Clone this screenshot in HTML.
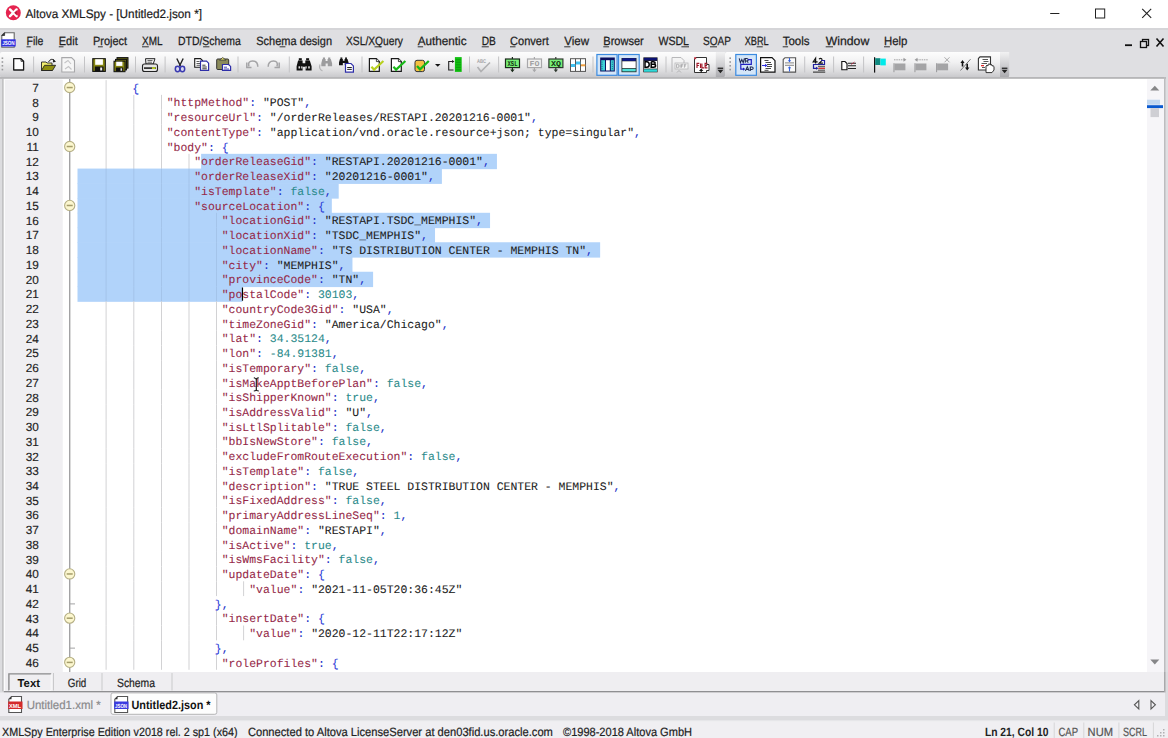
<!DOCTYPE html>
<html><head><meta charset="utf-8"><title>Altova XMLSpy</title>
<style>html,body{margin:0;padding:0;overflow:hidden;background:#e3e3e6}svg{display:block}</style></head>
<body><svg width="1168" height="738" viewBox="0 0 1168 738" text-rendering="geometricPrecision">
<rect x="0" y="0" width="1168" height="738" fill="#dfdfe2" />
<rect x="0" y="0" width="1168" height="28" fill="#ffffff" />
<rect x="0" y="28.2" width="1168" height="1.6" fill="#d3d3d5" />
<circle cx="13.3" cy="12.8" r="7.5" fill="#e5234f"/>
<path d="M10 9.4 L16.6 16.2 M16.6 9.4 L10 16.2" stroke="#fff" stroke-width="2.4" fill="none" stroke-linecap="round"/><path d="M14.2 12.8 L16.8 10.2 L16.8 15.4 Z" fill="#b81a3c"/>
<text x="25.50" y="17.80" font-family="Liberation Sans" font-size="12.3" font-weight="normal" fill="#1a1a1a" text-anchor="start" textLength="176.50" lengthAdjust="spacingAndGlyphs"  stroke="#1a1a1a" stroke-width="0.2">Altova XMLSpy - [Untitled2.json *]</text>
<path d="M1050.2 13.5 H1059.4" stroke="#222" stroke-width="1"/>
<rect x="1095.5" y="9" width="9.2" height="9" fill="none" stroke="#222" stroke-width="1"/>
<path d="M1142.2 8.8 L1151.2 17.8 M1151.2 8.8 L1142.2 17.8" stroke="#222" stroke-width="1.1"/>
<g><path d="M4.6 32.7 H14.2 V47.2 H1.8 V35.5 Z" fill="#fff" stroke="#666" stroke-width="1.1"/><path d="M1.8 35.5 L4.6 32.7 V35.5 Z" fill="#333" stroke="#333" stroke-width="0.8"/><rect x="1.3" y="39.3" width="14.4" height="7.2" fill="#2f2fe0"/><text x="2.2" y="45.4" font-family="Liberation Sans" font-size="6" font-weight="bold" fill="#fff" textLength="12.5" lengthAdjust="spacingAndGlyphs">JSON</text></g>
<text x="26.50" y="44.60" font-family="Liberation Sans" font-size="12" font-weight="normal" fill="#1e1e1e" text-anchor="start" textLength="16.90" lengthAdjust="spacingAndGlyphs" stroke="#1e1e1e" stroke-width="0.25">File</text>
<rect x="26.5" y="46.3" width="4.2" height="1" fill="#333" />
<text x="58.80" y="44.60" font-family="Liberation Sans" font-size="12" font-weight="normal" fill="#1e1e1e" text-anchor="start" textLength="18.90" lengthAdjust="spacingAndGlyphs" stroke="#1e1e1e" stroke-width="0.25">Edit</text>
<rect x="58.8" y="46.3" width="4.7" height="1" fill="#333" />
<text x="93.00" y="44.60" font-family="Liberation Sans" font-size="12" font-weight="normal" fill="#1e1e1e" text-anchor="start" textLength="34.00" lengthAdjust="spacingAndGlyphs" stroke="#1e1e1e" stroke-width="0.25">Project</text>
<rect x="97.9" y="46.3" width="4.9" height="1" fill="#333" />
<text x="142.00" y="44.60" font-family="Liberation Sans" font-size="12" font-weight="normal" fill="#1e1e1e" text-anchor="start" textLength="20.50" lengthAdjust="spacingAndGlyphs" stroke="#1e1e1e" stroke-width="0.25">XML</text>
<rect x="142.0" y="46.3" width="6.8" height="1" fill="#333" />
<text x="178.00" y="44.60" font-family="Liberation Sans" font-size="12" font-weight="normal" fill="#1e1e1e" text-anchor="start" textLength="62.70" lengthAdjust="spacingAndGlyphs" stroke="#1e1e1e" stroke-width="0.25">DTD/Schema</text>
<rect x="203.1" y="46.3" width="6.3" height="1" fill="#333" />
<text x="256.30" y="44.60" font-family="Liberation Sans" font-size="12" font-weight="normal" fill="#1e1e1e" text-anchor="start" textLength="75.70" lengthAdjust="spacingAndGlyphs" stroke="#1e1e1e" stroke-width="0.25">Schema design</text>
<rect x="279.6" y="46.3" width="5.8" height="1" fill="#333" />
<text x="346.00" y="44.60" font-family="Liberation Sans" font-size="12" font-weight="normal" fill="#1e1e1e" text-anchor="start" textLength="57.00" lengthAdjust="spacingAndGlyphs" stroke="#1e1e1e" stroke-width="0.25">XSL/XQuery</text>
<rect x="374.5" y="46.3" width="5.7" height="1" fill="#333" />
<text x="417.70" y="44.60" font-family="Liberation Sans" font-size="12" font-weight="normal" fill="#1e1e1e" text-anchor="start" textLength="48.90" lengthAdjust="spacingAndGlyphs" stroke="#1e1e1e" stroke-width="0.25">Authentic</text>
<rect x="417.7" y="46.3" width="5.4" height="1" fill="#333" />
<text x="481.70" y="44.60" font-family="Liberation Sans" font-size="12" font-weight="normal" fill="#1e1e1e" text-anchor="start" textLength="14.10" lengthAdjust="spacingAndGlyphs" stroke="#1e1e1e" stroke-width="0.25">DB</text>
<rect x="481.7" y="46.3" width="7.1" height="1" fill="#333" />
<text x="510.00" y="44.60" font-family="Liberation Sans" font-size="12" font-weight="normal" fill="#1e1e1e" text-anchor="start" textLength="38.80" lengthAdjust="spacingAndGlyphs" stroke="#1e1e1e" stroke-width="0.25">Convert</text>
<rect x="510.0" y="46.3" width="5.5" height="1" fill="#333" />
<text x="564.20" y="44.60" font-family="Liberation Sans" font-size="12" font-weight="normal" fill="#1e1e1e" text-anchor="start" textLength="24.80" lengthAdjust="spacingAndGlyphs" stroke="#1e1e1e" stroke-width="0.25">View</text>
<rect x="564.2" y="46.3" width="6.2" height="1" fill="#333" />
<text x="603.30" y="44.60" font-family="Liberation Sans" font-size="12" font-weight="normal" fill="#1e1e1e" text-anchor="start" textLength="40.40" lengthAdjust="spacingAndGlyphs" stroke="#1e1e1e" stroke-width="0.25">Browser</text>
<rect x="603.3" y="46.3" width="5.8" height="1" fill="#333" />
<text x="658.40" y="44.60" font-family="Liberation Sans" font-size="12" font-weight="normal" fill="#1e1e1e" text-anchor="start" textLength="30.60" lengthAdjust="spacingAndGlyphs" stroke="#1e1e1e" stroke-width="0.25">WSDL</text>
<rect x="681.4" y="46.3" width="7.6" height="1" fill="#333" />
<text x="703.00" y="44.60" font-family="Liberation Sans" font-size="12" font-weight="normal" fill="#1e1e1e" text-anchor="start" textLength="28.00" lengthAdjust="spacingAndGlyphs" stroke="#1e1e1e" stroke-width="0.25">SOAP</text>
<rect x="710.0" y="46.3" width="7.0" height="1" fill="#333" />
<text x="744.70" y="44.60" font-family="Liberation Sans" font-size="12" font-weight="normal" fill="#1e1e1e" text-anchor="start" textLength="24.00" lengthAdjust="spacingAndGlyphs" stroke="#1e1e1e" stroke-width="0.25">XBRL</text>
<rect x="756.7" y="46.3" width="6.0" height="1" fill="#333" />
<text x="782.70" y="44.60" font-family="Liberation Sans" font-size="12" font-weight="normal" fill="#1e1e1e" text-anchor="start" textLength="26.90" lengthAdjust="spacingAndGlyphs" stroke="#1e1e1e" stroke-width="0.25">Tools</text>
<rect x="782.7" y="46.3" width="5.4" height="1" fill="#333" />
<text x="825.70" y="44.60" font-family="Liberation Sans" font-size="12" font-weight="normal" fill="#1e1e1e" text-anchor="start" textLength="43.60" lengthAdjust="spacingAndGlyphs" stroke="#1e1e1e" stroke-width="0.25">Window</text>
<rect x="825.7" y="46.3" width="7.3" height="1" fill="#333" />
<text x="884.00" y="44.60" font-family="Liberation Sans" font-size="12" font-weight="normal" fill="#1e1e1e" text-anchor="start" textLength="23.40" lengthAdjust="spacingAndGlyphs" stroke="#1e1e1e" stroke-width="0.25">Help</text>
<rect x="884.0" y="46.3" width="5.9" height="1" fill="#333" />
<path d="M1125 45.2 H1132" stroke="#111" stroke-width="1.8"/>
<rect x="1142.5" y="39.5" width="6" height="6" fill="none" stroke="#111" stroke-width="1.3"/><rect x="1140.5" y="41.5" width="6" height="6" fill="#dfdfe2" stroke="#111" stroke-width="1.3"/>
<path d="M1156.5 38.5 L1163.5 46.5 M1163.5 38.5 L1156.5 46.5" stroke="#111" stroke-width="1.6"/>
<defs><linearGradient id="tb" x1="0" y1="0" x2="0" y2="1"><stop offset="0" stop-color="#fdfdfd"/><stop offset="0.4" stop-color="#f1f1f2"/><stop offset="0.75" stop-color="#dcdcde"/><stop offset="1" stop-color="#c8c8cb"/></linearGradient><linearGradient id="chev" x1="0" y1="0" x2="0" y2="1"><stop offset="0" stop-color="#f2f2f3"/><stop offset="0.5" stop-color="#d0d0d3"/><stop offset="1" stop-color="#a9a9ad"/></linearGradient></defs>
<rect x="0" y="52" width="724" height="25.5" rx="2" fill="url(#tb)"/>
<rect x="725" y="52" width="284" height="25.5" rx="2" fill="url(#tb)"/>
<rect x="1.5999999999999999" y="57.400000000000006" width="1.6" height="1.6" fill="#9a9a9c"/>
<rect x="1.5999999999999999" y="61.2" width="1.6" height="1.6" fill="#9a9a9c"/>
<rect x="1.5999999999999999" y="65.0" width="1.6" height="1.6" fill="#9a9a9c"/>
<rect x="1.5999999999999999" y="68.8" width="1.6" height="1.6" fill="#9a9a9c"/>
<rect x="729.4000000000001" y="57.400000000000006" width="1.6" height="1.6" fill="#9a9a9c"/>
<rect x="729.4000000000001" y="61.2" width="1.6" height="1.6" fill="#9a9a9c"/>
<rect x="729.4000000000001" y="65.0" width="1.6" height="1.6" fill="#9a9a9c"/>
<rect x="729.4000000000001" y="68.8" width="1.6" height="1.6" fill="#9a9a9c"/>
<rect x="33.1" y="56.5" width="1" height="16" fill="#c4c4c6"/>
<rect x="84.0" y="56.5" width="1" height="16" fill="#c4c4c6"/>
<rect x="135.0" y="56.5" width="1" height="16" fill="#c4c4c6"/>
<rect x="164.6" y="56.5" width="1" height="16" fill="#c4c4c6"/>
<rect x="237.5" y="56.5" width="1" height="16" fill="#c4c4c6"/>
<rect x="288.8" y="56.5" width="1" height="16" fill="#c4c4c6"/>
<rect x="361.5" y="56.5" width="1" height="16" fill="#c4c4c6"/>
<rect x="469.0" y="56.5" width="1" height="16" fill="#c4c4c6"/>
<rect x="498.1" y="56.5" width="1" height="16" fill="#c4c4c6"/>
<rect x="592.5" y="56.5" width="1" height="16" fill="#c4c4c6"/>
<rect x="665.5" y="56.5" width="1" height="16" fill="#c4c4c6"/>
<rect x="804.2" y="56.5" width="1" height="16" fill="#c4c4c6"/>
<rect x="833.1" y="56.5" width="1" height="16" fill="#c4c4c6"/>
<rect x="863.1" y="56.5" width="1" height="16" fill="#c4c4c6"/>
<path d="M715.8 52 H725.0 V75 Q725.0 77.5 722.5 77.5 H715.8 Z" fill="url(#chev)"/>
<rect x="717.5999999999999" y="67.6" width="5.6" height="1.3" fill="#222"/>
<path d="M717.4 69.8 H723.4 L720.4 73.2 Z" fill="#222"/>
<path d="M1000 52 H1009.2 V75 Q1009.2 77.5 1006.7 77.5 H1000 Z" fill="url(#chev)"/>
<rect x="1001.8" y="67.6" width="5.6" height="1.3" fill="#222"/>
<path d="M1001.6 69.8 H1007.6 L1004.6 73.2 Z" fill="#222"/>
<path d="M13.7 58.7 H21 L23.6 61.3 V70 H13.7 Z" fill="#fff" stroke="#1a1a1a" stroke-width="1.3" stroke-linejoin="round"/><path d="M21 58.9 V61.3 H23.4" fill="none" stroke="#1a1a1a" stroke-width="0.8"/>
<path d="M41.5 62 H46 L47 63 H52 V70.5 H41.5 Z" fill="#f4f070" stroke="#222" stroke-width="0.9"/>
<path d="M41.5 70.5 L44.5 65.3 H55.6 L52.5 70.5 Z" fill="#8f8f10" stroke="#222" stroke-width="0.9"/>
<path d="M48.5 62 Q51 57.5 54.5 60.5" stroke="#222" stroke-width="1" fill="none"/><path d="M53.2 59 L56 61.8 L52.8 62.4 Z" fill="#222"/>
<path d="M61.8 57.6 H71.5 L74.5 60.6 V72 H61.8 Z" fill="#f6f6f6" stroke="#a8a8aa" stroke-width="1.1"/>
<path d="M64.5 63 L68 60.5 L71 64 M65 69 L68.5 66.5 L71.5 69.5" stroke="#c4c4c6" stroke-width="1.1" fill="none"/>
<rect x="92.8" y="58.7" width="12.5" height="12.7" fill="#868612" stroke="#111" stroke-width="1.1"/>
<rect x="95.2" y="59.2" width="7.7" height="5.6" fill="#fff"/>
<rect x="94.8" y="66.5" width="8.8" height="4.9" fill="#111"/><rect x="100.2" y="67.5" width="2" height="3" fill="#eee"/>
<rect x="117" y="57.6" width="11" height="10.5" fill="#5a5a10" stroke="#111" stroke-width="1"/>
<rect x="115.5" y="59.4" width="11" height="10.5" fill="#6b6b12" stroke="#111" stroke-width="1"/>
<rect x="114" y="61.2" width="11" height="10.5" fill="#868612" stroke="#111" stroke-width="1"/>
<rect x="116.2" y="61.7" width="6.2" height="4.2" fill="#fff"/><rect x="115.8" y="67.5" width="7.5" height="4" fill="#111"/><rect x="120.5" y="68.3" width="1.6" height="2.5" fill="#ddd"/>
<path d="M145.5 58.7 H155 L153.2 64 H146 Z" fill="#f4f4f4" stroke="#222" stroke-width="1"/>
<path d="M147.5 60.5 H152.5 M147.5 62.2 H152" stroke="#444" stroke-width="0.8"/>
<rect x="142.5" y="64" width="15" height="7.5" rx="2" fill="#e6e6e6" stroke="#222" stroke-width="1.1"/>
<rect x="144" y="67.3" width="12" height="1.6" fill="#222"/><rect x="152" y="67.3" width="3.5" height="1.6" fill="#c8e020"/>
<path d="M176.8 58.5 L180.5 66 M183.2 58.5 L179.5 66" stroke="#222" stroke-width="1.4" fill="none"/>
<ellipse cx="177.6" cy="69" rx="2.3" ry="2.7" fill="#d8d8f0" stroke="#3a3ab0" stroke-width="1.5"/>
<ellipse cx="182.4" cy="69" rx="2.3" ry="2.7" fill="#d8d8f0" stroke="#3a3ab0" stroke-width="1.5"/>
<path d="M194.7 58.6 H200.5 L202.5 60.6 V67.2 H194.7 Z" fill="#fff" stroke="#1a1a1a" stroke-width="1.1"/><path d="M196.5 61.5 H199.5 M196.5 63.5 H200.5 M196.5 65.3 H200" stroke="#333" stroke-width="0.8"/>
<path d="M200.5 61.1 H206.5 L208.6 63.2 V70.4 H200.5 Z" fill="#fff" stroke="#2e2ea8" stroke-width="1.2"/><path d="M202.3 65.2 H205.5 M202.3 67 H206.8 M202.3 68.8 H206.8" stroke="#222" stroke-width="0.9"/>
<rect x="216.7" y="59" width="12" height="10.5" rx="1" fill="#8a8a5a" stroke="#333" stroke-width="1"/>
<path d="M219.5 60 L222.7 57.6 L225.9 60 Z" fill="#f4f070" stroke="#333" stroke-width="0.8"/>
<path d="M222.5 64.5 H228.6 L230.6 66.4 V70.4 H222.5 Z" fill="#fff" stroke="#2e2ea8" stroke-width="1.2"/><path d="M224 67.2 H227 M224 69 H229" stroke="#3a3ab0" stroke-width="0.9"/>
<path d="M249 66.5 Q247.5 61 252.5 61 Q257.8 61 257.8 66.8" stroke="#a4a4a6" stroke-width="1.5" fill="none"/><path d="M246.8 62.5 V67.5 H251.5" stroke="#a4a4a6" stroke-width="1.5" fill="none"/>
<path d="M277 66.5 Q278.5 61 273.5 61 Q268.2 61 268.2 66.8" stroke="#a4a4a6" stroke-width="1.5" fill="none"/><path d="M279.2 62.5 V67.5 H274.5" stroke="#a4a4a6" stroke-width="1.5" fill="none"/>
<g transform="translate(296.6,58.2) scale(1.0)" fill="#111"><rect x="2.2" y="0" width="3" height="2.2"/><rect x="9.5" y="0" width="3" height="2.2"/><path d="M1.5 2.2 H6 V5 H8.7 V2.2 H13.2 L15 8 V12.3 H9 V8.5 H6 V12.3 H0 V8 Z"/></g>
<rect x="298.5" y="66.3" width="1.6" height="2.2" fill="#ddd"/><rect x="301.2" y="66.3" width="1.2" height="2.2" fill="#ddd"/><rect x="305.5" y="66.3" width="1.2" height="2.2" fill="#ddd"/><rect x="308.2" y="66.3" width="1.6" height="2.2" fill="#ddd"/>
<g transform="translate(321.3,57.5) scale(0.72)" fill="#9c9c9e"><rect x="2.2" y="0" width="3" height="2.2"/><rect x="9.5" y="0" width="3" height="2.2"/><path d="M1.5 2.2 H6 V5 H8.7 V2.2 H13.2 L15 8 V12.3 H9 V8.5 H6 V12.3 H0 V8 Z"/></g>
<path d="M320 64.5 Q318.5 69 322.5 71" stroke="#b4b4b6" stroke-width="1.2" fill="none"/>
<g transform="translate(339,57.5) scale(0.64)" fill="#111"><rect x="2.2" y="0" width="3" height="2.2"/><rect x="9.5" y="0" width="3" height="2.2"/><path d="M1.5 2.2 H6 V5 H8.7 V2.2 H13.2 L15 8 V12.3 H9 V8.5 H6 V12.3 H0 V8 Z"/></g>
<path d="M345.5 63.5 H351 L353.4 65.9 V72.2 H345.5 Z" fill="#fff" stroke="#2e2ea8" stroke-width="1.2"/><path d="M347.2 67.5 H351.8 M347.2 69.4 H351.8" stroke="#222" stroke-width="1"/>
<path d="M369.4 58.7 H376.4 L379.29999999999995 61.6 V71.4 H369.4 Z" fill="#fff" stroke="#1a1a1a" stroke-width="1.2"/><path d="M376.4 58.7 V61.6 H379.29999999999995" fill="#e8e8e8" stroke="#1a1a1a" stroke-width="0.8"/><path d="M371.4 66.8 L374.09999999999997 69.6 L383.4 61" stroke="#b8d020" stroke-width="2.2" fill="none"/>
<path d="M391.4 58.7 H398.4 L401.29999999999995 61.6 V71.4 H391.4 Z" fill="#fff" stroke="#1a1a1a" stroke-width="1.2"/><path d="M398.4 58.7 V61.6 H401.29999999999995" fill="#e8e8e8" stroke="#1a1a1a" stroke-width="0.8"/><path d="M393.4 66.8 L396.09999999999997 69.6 L405.4 61" stroke="#18b818" stroke-width="2.2" fill="none"/>
<rect x="415" y="60.3" width="9.5" height="11.3" rx="2" fill="#f5c040" stroke="#333" stroke-width="1"/>
<path d="M417 66 L420 69.3 L428.8 61" stroke="#18b818" stroke-width="2.3" fill="none"/>
<path d="M435 64 H440.5 L437.75 66.8 Z" fill="#111"/>
<path d="M453.5 61.5 H448.7 V70 H453.5" stroke="#222" stroke-width="1.1" fill="none"/><path d="M452 60 L454.5 61.5 L452 63 Z" fill="#222"/>
<rect x="454.9" y="57.1" width="6.8" height="14.8" fill="#10c010"/>
<path d="M455.8 59.8 H460.8 M455.8 62.3 H460.8 M455.8 64.8 H460.8 M455.8 67.3 H460.8 M455.8 69.8 H460.8" stroke="#0a8a0a" stroke-width="0.7"/>
<text x="477" y="63" font-family="Liberation Sans" font-size="5.5" font-weight="bold" fill="#a0a0a2" textLength="9" lengthAdjust="spacingAndGlyphs">ABC</text>
<path d="M477.5 67 L481 71.5 L490 62.5" stroke="#b0b0b2" stroke-width="1.6" fill="none"/>
<path d="M512.4 57 V59 M512.4 67.5 V70" stroke="#1a2a1a" stroke-width="1.2"/><path d="M510.2 69.6 H514.6 L512.4 72.2 Z" fill="#1a2a1a"/><rect x="505.5" y="59" width="14" height="8.6" fill="#78f078" stroke="#1a2a1a" stroke-width="1.2"/><text x="507.5" y="66" font-family="Liberation Mono" font-size="7.5" font-weight="bold" fill="#103010" textLength="10" lengthAdjust="spacingAndGlyphs">XSL</text>
<path d="M534.4 57 V59 M534.4 67.5 V70" stroke="#a8a8aa" stroke-width="1.2"/><path d="M532.2 69.6 H536.6 L534.4 72.2 Z" fill="#a8a8aa"/><rect x="527.5" y="59" width="14" height="8.6" fill="#f0f0f0" stroke="#a8a8aa" stroke-width="1.2"/><text x="529.5" y="66" font-family="Liberation Mono" font-size="7.5" font-weight="bold" fill="#a0a0a2" textLength="10" lengthAdjust="spacingAndGlyphs">FO</text>
<path d="M555.8 57 V59 M555.8 67.5 V70" stroke="#303a30" stroke-width="1.2"/><path d="M553.6 69.6 H558.0 L555.8 72.2 Z" fill="#303a30"/><rect x="548.9" y="59" width="14" height="8.6" fill="#78f078" stroke="#303a30" stroke-width="1.2"/><text x="550.9" y="66" font-family="Liberation Mono" font-size="7.5" font-weight="bold" fill="#103010" textLength="10" lengthAdjust="spacingAndGlyphs">XQ</text>
<rect x="570.5" y="58.7" width="15" height="12.7" fill="#fff" stroke="#555" stroke-width="1"/>
<path d="M575.5 58.7 V71.4 M580.5 58.7 V71.4" stroke="#555" stroke-width="1"/>
<rect x="571" y="64" width="4.3" height="3" fill="#40c0f0"/><rect x="576" y="61.5" width="4.3" height="3" fill="#40c0f0"/><rect x="581" y="64.3" width="4.3" height="2" fill="#f0a040"/>
<rect x="596.9" y="54.5" width="20.200000000000045" height="20.8" fill="#d4e6f8" stroke="#3b8be0" stroke-width="1.2"/>
<rect x="618.5" y="54.5" width="20.700000000000045" height="20.8" fill="#d4e6f8" stroke="#3b8be0" stroke-width="1.2"/>
<rect x="735.8" y="54.5" width="20.600000000000023" height="20.8" fill="#d4e6f8" stroke="#3b8be0" stroke-width="1.2"/>
<rect x="600.2" y="57.5" width="14.6" height="14" fill="#0a1060" />
<rect x="601.2" y="60.2" width="3.8" height="10.3" fill="#40d0d8"/><rect x="606" y="60.2" width="3.8" height="10.3" fill="#fff"/><rect x="610.8" y="60.2" width="3" height="10.3" fill="#40d0d8"/>
<path d="M602 61.5 V69.5 M612.3 61.5 V69.5" stroke="#0a6070" stroke-width="0.8" stroke-dasharray="1.2 1"/>
<rect x="621.5" y="58" width="15" height="14.2" fill="#222"/><rect x="622.3" y="58.3" width="13.4" height="2.5" fill="#0a1890"/><rect x="622.3" y="61.3" width="13.4" height="6.8" fill="#fff"/><rect x="622.3" y="68.8" width="13.4" height="2.6" fill="#50e0d8"/>
<rect x="643.3" y="57.4" width="14.3" height="14.9" fill="#222"/><rect x="644" y="57.8" width="13" height="2.6" fill="#0a1070"/><rect x="644" y="61" width="13" height="7.6" fill="#fff"/><rect x="644" y="69.3" width="13" height="2.5" fill="#30d8d8"/>
<path d="M645 61.7 V67.3 H646.8 Q649.2 67.3 649.2 64.5 Q649.2 61.7 646.8 61.7 Z M651.2 61.7 V67.3 H653.6 Q655.6 67.3 655.6 65.8 Q655.6 64.3 653.6 64.3 H651.2 M651.2 64.3 H653.3 Q655.2 64.3 655.2 63 Q655.2 61.7 653.3 61.7 H651.2" stroke="#000" stroke-width="1.5" fill="none"/>
<path d="M672 57.5 H681 L684 60.5 V66 M672 57.5 V72" stroke="#b8b8ba" stroke-width="1" fill="#f4f4f4"/>
<rect x="675" y="63" width="13" height="6" fill="#f4f4f4" stroke="#b8b8ba" stroke-width="0.8"/><path d="M676.6 64.3 V67.7 H677.7 Q679 67.7 679 66 Q679 64.3 677.7 64.3 Z M680.2 64.3 V67.7 M681.5 67.7 V64.3 H683.3 M681.5 65.9 H683 M684.4 67.7 V64.3 H686.3 M684.4 65.9 H686" stroke="#a8a8aa" stroke-width="0.9" fill="none"/>
<path d="M677 72.5 L679 70.5 L681 72.5" stroke="#b0b0b2" stroke-width="1" fill="none"/>
<path d="M694.5 59 L696 57.5 H706.5 V64.5 H709 V70.5 H706.5 V72.5 H694.5 Z" fill="#fff" stroke="#333" stroke-width="1"/><rect x="694.2" y="57.2" width="2" height="2" fill="#c03040"/>
<path d="M697 67.9 V63.4 H699.3 M697 65.5 H698.9 M700.5 63.4 V67.9 M701.9 63.4 V67.9 H704 M707.4 63.4 H705.1 V67.9 H707.4 M705.1 65.6 H707" stroke="#a01828" stroke-width="1.15" fill="none"/>
<path d="M699 70.9 L701.2 68.6 L703.4 70.9 Z" fill="#111"/><rect x="700.6" y="70.5" width="1.2" height="2" fill="#111"/>
<path d="M739.2 58.3 L740.4 62.7 L741.8 59.6 L743.2 62.7 L744.4 58.3 M745.3 62.7 V58.4 H747 Q748.3 58.6 748.2 59.9 Q748.1 61 746.8 61 H745.3 M746.8 61 L748.3 62.7" stroke="#1e2850" stroke-width="1.05" fill="none"/>
<path d="M745.4 70.9 L747.3 66.8 L749.2 70.9 M746 69.5 H748.6 M750.3 70.9 V66.9 H752 Q753.3 67.1 753.2 68.3 Q753.1 69.4 751.8 69.4 H750.3" stroke="#1e2850" stroke-width="1.05" fill="none"/>
<path d="M748 59.6 H751.3 V64.4 H740.8 V69.1 H743.5" stroke="#2020c0" stroke-width="1.2" fill="none"/><path d="M743 67.5 L745.3 69.1 L743 70.7 Z" fill="#2020c0"/>
<path d="M760.6 57.7 H772 L775 60.7 V72.1 H760.6 Z" fill="#fff" stroke="#111" stroke-width="1.2"/>
<path d="M764.5 60.5 H768.5 M765.5 62.5 H771 M767 64.5 H772 M767 66.5 H772 M765.5 68.5 H771 M764.5 70.3 H768.5" stroke="#333" stroke-width="0.9"/>
<path d="M762 65.5 H766" stroke="#3030e0" stroke-width="1.1"/><path d="M765 63.8 L767.5 65.5 L765 67.2 Z" fill="#3030e0"/>
<path d="M783.2 59.5 L785 57.7 H795.6 V72.1 H783.2 Z" fill="#fafafa" stroke="#555" stroke-width="1.1"/>
<path d="M785 62.9 H794 M785 65.3 H794" stroke="#555" stroke-width="0.7"/>
<path d="M789.5 58 V61.5" stroke="#3060e0" stroke-width="1.1"/><path d="M787.8 60.3 H791.2 L789.5 62.2 Z" fill="#3060e0"/>
<path d="M789.5 71.5 V67" stroke="#3060e0" stroke-width="1.1"/><path d="M787.8 68.2 H791.2 L789.5 66.3 Z" fill="#3060e0"/>
<path d="M815.6 63.6 V58.2 L813.2 61.9 H817.6" stroke="#111" stroke-width="1.2" fill="none"/>
<path d="M819 59.2 Q820.3 57.9 821.6 58.7 Q822.6 59.9 821.4 61.1 L819.1 63.1 H822.9" stroke="#111" stroke-width="1.1" fill="none"/>
<path d="M821 60.5 H824.5 V64.5 H813.5 V68.3 H816.5" stroke="#2020a0" stroke-width="1.2" fill="none"/><path d="M816 66.8 L818.4 68.3 L816 69.8 Z" fill="#2020a0"/>
<path d="M818 66.3 H825 M818.5 68.3 H825 M818 70.2 H825" stroke="#333" stroke-width="0.9"/><rect x="818.5" y="67.7" width="6.5" height="1.2" fill="#e03030"/>
<rect x="813" y="71.6" width="12.2" height="1" fill="#222"/>
<path d="M841.8 61.5 H845 L847 63.5 V69.7 H841.8 Z" fill="#fff" stroke="#111" stroke-width="1.1"/>
<path d="M848 63.3 H856 M848 65.8 H856 M848 68.5 H856" stroke="#222" stroke-width="1.1"/><path d="M851 64.6 L854.5 62" stroke="#c02040" stroke-width="0.7"/>
<rect x="874" y="57.2" width="1.2" height="15.4" fill="#111"/><rect x="875.2" y="58.2" width="5.2" height="6.8" fill="#108a80"/><rect x="880.4" y="58.6" width="5.4" height="6.8" fill="#00eaea"/>
<rect x="893.5" y="63.2" width="0.9" height="9" fill="#909092"/><rect x="894.4" y="63.5" width="11" height="6.8" fill="#a4a4a6"/>
<path d="M894 59.8 H905" stroke="#9a9a9c" stroke-width="0.9" stroke-dasharray="1.5 0.8"/><path d="M903.5 57.8 L906.4 59.8 L903.5 61.8 Z" fill="#9a9a9c"/>
<rect x="914.5" y="63.2" width="0.9" height="9" fill="#909092"/><rect x="915.4" y="63.5" width="11" height="6.8" fill="#a4a4a6"/>
<path d="M917 59.8 H928" stroke="#9a9a9c" stroke-width="0.9" stroke-dasharray="1.5 0.8"/><path d="M917.5 57.8 L914.6 59.8 L917.5 61.8 Z" fill="#9a9a9c"/>
<rect x="936.2" y="63.2" width="0.9" height="9" fill="#909092"/><rect x="937.1" y="63.5" width="11" height="6.8" fill="#a4a4a6"/>
<path d="M944.5 57.3 L949.5 62.3 M949.5 57.3 L944.5 62.3" stroke="#a0a0a2" stroke-width="0.9"/>
<path d="M960.5 70.5 L970.5 59.2" stroke="#555" stroke-width="0.8"/>
<path d="M962.5 60 L964.6 63 H963.3 V66.5 H961.7 V63 H960.4 Z" fill="#111"/><path d="M967.2 70.5 L965 67.5 H966.4 V63.8 H968 V67.5 H969.4 Z" fill="#111"/>
<path d="M980 56.9 H990.5 V70 H978.4 V58.5 Z" fill="#fff" stroke="#333" stroke-width="1.1"/>
<path d="M982.5 59.5 H988 M983.5 61.5 H988.5 M981.5 63.5 H987 M982 67.5 H985" stroke="#444" stroke-width="0.9"/><rect x="981" y="65" width="3" height="1.3" fill="#e03030"/>
<path d="M986 72.6 V66 Q987 64.5 988 66 V64.5 Q989 63 990 64.5 V65 Q991 63.8 992 65 V66 Q993 65 994 66.5 V70 L992 72.6 Z" fill="#fff" stroke="#333" stroke-width="1"/>
<rect x="0" y="77" width="1166" height="1.9" fill="#b6b6b8" />
<rect x="0" y="79" width="2" height="593" fill="#dcdcdf" />
<rect x="2" y="78.9" width="1.8" height="593.1" fill="#c2c2c4" />
<rect x="3.8" y="78.9" width="1161" height="1" fill="#fcfcfd" />
<rect x="3.8" y="79.5" width="1.2" height="592.5" fill="#fcfcfd" />
<rect x="5" y="79.9" width="57.5" height="592.1" fill="#f0eff2" />
<rect x="62.5" y="79" width="1084.5" height="593" fill="#ffffff" />
<rect x="1147" y="79.9" width="17" height="592.1" fill="#f6f5f8" />
<rect x="1164" y="77" width="1.5" height="595" fill="#bdbdbf" />
<path d="M1150.3 90.6 L1154.8 85.7 L1159.3 90.6 Z" fill="#868688"/>
<path d="M1150.3 659.5 L1154.8 664.4 L1159.3 659.5 Z" fill="#868688"/>
<rect x="1147" y="99.7" width="13" height="5" fill="#c2d8f0" />
<rect x="1147" y="105.2" width="16" height="2.9" fill="#0a5ad0" />
<rect x="1150.5" y="108.1" width="8.5" height="9" fill="#cfcfd4" />
<rect x="201.10" y="153.83" width="295.84" height="15.34" fill="#b1d3fa" />
<rect x="77.50" y="168.57" width="364.40" height="15.34" fill="#b1d3fa" />
<rect x="77.50" y="183.31" width="261.20" height="15.34" fill="#b1d3fa" />
<rect x="77.50" y="198.05" width="254.32" height="15.34" fill="#b1d3fa" />
<rect x="77.50" y="212.79" width="412.56" height="15.34" fill="#b1d3fa" />
<rect x="77.50" y="227.53" width="357.52" height="15.34" fill="#b1d3fa" />
<rect x="77.50" y="242.27" width="522.64" height="15.34" fill="#b1d3fa" />
<rect x="77.50" y="257.01" width="274.96" height="15.34" fill="#b1d3fa" />
<rect x="77.50" y="271.75" width="295.60" height="15.34" fill="#b1d3fa" />
<rect x="77.50" y="286.49" width="164.88" height="15.34" fill="#b1d3fa" />
<rect x="105.60" y="80.13" width="1" height="14.79" fill="#d2d2d4" />
<rect x="105.60" y="94.87" width="1" height="14.79" fill="#d2d2d4" />
<rect x="133.30" y="94.87" width="1" height="14.79" fill="#d2d2d4" />
<rect x="161.00" y="94.87" width="1" height="14.79" fill="#d2d2d4" />
<rect x="105.60" y="109.61" width="1" height="14.79" fill="#d2d2d4" />
<rect x="133.30" y="109.61" width="1" height="14.79" fill="#d2d2d4" />
<rect x="161.00" y="109.61" width="1" height="14.79" fill="#d2d2d4" />
<rect x="105.60" y="124.35" width="1" height="14.79" fill="#d2d2d4" />
<rect x="133.30" y="124.35" width="1" height="14.79" fill="#d2d2d4" />
<rect x="161.00" y="124.35" width="1" height="14.79" fill="#d2d2d4" />
<rect x="105.60" y="139.09" width="1" height="14.79" fill="#d2d2d4" />
<rect x="133.30" y="139.09" width="1" height="14.79" fill="#d2d2d4" />
<rect x="161.00" y="139.09" width="1" height="14.79" fill="#d2d2d4" />
<rect x="105.60" y="153.83" width="1" height="14.79" fill="#d2d2d4" />
<rect x="133.30" y="153.83" width="1" height="14.79" fill="#d2d2d4" />
<rect x="161.00" y="153.83" width="1" height="14.79" fill="#d2d2d4" />
<rect x="188.50" y="153.83" width="1" height="14.79" fill="#d2d2d4" />
<rect x="105.60" y="168.57" width="1" height="14.79" fill="#a4c4ea" />
<rect x="133.30" y="168.57" width="1" height="14.79" fill="#a4c4ea" />
<rect x="161.00" y="168.57" width="1" height="14.79" fill="#a4c4ea" />
<rect x="188.50" y="168.57" width="1" height="14.79" fill="#a4c4ea" />
<rect x="105.60" y="183.31" width="1" height="14.79" fill="#a4c4ea" />
<rect x="133.30" y="183.31" width="1" height="14.79" fill="#a4c4ea" />
<rect x="161.00" y="183.31" width="1" height="14.79" fill="#a4c4ea" />
<rect x="188.50" y="183.31" width="1" height="14.79" fill="#a4c4ea" />
<rect x="105.60" y="198.05" width="1" height="14.79" fill="#a4c4ea" />
<rect x="133.30" y="198.05" width="1" height="14.79" fill="#a4c4ea" />
<rect x="161.00" y="198.05" width="1" height="14.79" fill="#a4c4ea" />
<rect x="188.50" y="198.05" width="1" height="14.79" fill="#a4c4ea" />
<rect x="105.60" y="212.79" width="1" height="14.79" fill="#a4c4ea" />
<rect x="133.30" y="212.79" width="1" height="14.79" fill="#a4c4ea" />
<rect x="161.00" y="212.79" width="1" height="14.79" fill="#a4c4ea" />
<rect x="188.50" y="212.79" width="1" height="14.79" fill="#a4c4ea" />
<rect x="216.00" y="212.79" width="1" height="14.79" fill="#a4c4ea" />
<rect x="105.60" y="227.53" width="1" height="14.79" fill="#a4c4ea" />
<rect x="133.30" y="227.53" width="1" height="14.79" fill="#a4c4ea" />
<rect x="161.00" y="227.53" width="1" height="14.79" fill="#a4c4ea" />
<rect x="188.50" y="227.53" width="1" height="14.79" fill="#a4c4ea" />
<rect x="216.00" y="227.53" width="1" height="14.79" fill="#a4c4ea" />
<rect x="105.60" y="242.27" width="1" height="14.79" fill="#a4c4ea" />
<rect x="133.30" y="242.27" width="1" height="14.79" fill="#a4c4ea" />
<rect x="161.00" y="242.27" width="1" height="14.79" fill="#a4c4ea" />
<rect x="188.50" y="242.27" width="1" height="14.79" fill="#a4c4ea" />
<rect x="216.00" y="242.27" width="1" height="14.79" fill="#a4c4ea" />
<rect x="105.60" y="257.01" width="1" height="14.79" fill="#a4c4ea" />
<rect x="133.30" y="257.01" width="1" height="14.79" fill="#a4c4ea" />
<rect x="161.00" y="257.01" width="1" height="14.79" fill="#a4c4ea" />
<rect x="188.50" y="257.01" width="1" height="14.79" fill="#a4c4ea" />
<rect x="216.00" y="257.01" width="1" height="14.79" fill="#a4c4ea" />
<rect x="105.60" y="271.75" width="1" height="14.79" fill="#a4c4ea" />
<rect x="133.30" y="271.75" width="1" height="14.79" fill="#a4c4ea" />
<rect x="161.00" y="271.75" width="1" height="14.79" fill="#a4c4ea" />
<rect x="188.50" y="271.75" width="1" height="14.79" fill="#a4c4ea" />
<rect x="216.00" y="271.75" width="1" height="14.79" fill="#a4c4ea" />
<rect x="105.60" y="286.49" width="1" height="14.79" fill="#a4c4ea" />
<rect x="133.30" y="286.49" width="1" height="14.79" fill="#a4c4ea" />
<rect x="161.00" y="286.49" width="1" height="14.79" fill="#a4c4ea" />
<rect x="188.50" y="286.49" width="1" height="14.79" fill="#a4c4ea" />
<rect x="216.00" y="286.49" width="1" height="14.79" fill="#a4c4ea" />
<rect x="105.60" y="301.23" width="1" height="14.79" fill="#d2d2d4" />
<rect x="133.30" y="301.23" width="1" height="14.79" fill="#d2d2d4" />
<rect x="161.00" y="301.23" width="1" height="14.79" fill="#d2d2d4" />
<rect x="188.50" y="301.23" width="1" height="14.79" fill="#d2d2d4" />
<rect x="216.00" y="301.23" width="1" height="14.79" fill="#d2d2d4" />
<rect x="105.60" y="315.97" width="1" height="14.79" fill="#d2d2d4" />
<rect x="133.30" y="315.97" width="1" height="14.79" fill="#d2d2d4" />
<rect x="161.00" y="315.97" width="1" height="14.79" fill="#d2d2d4" />
<rect x="188.50" y="315.97" width="1" height="14.79" fill="#d2d2d4" />
<rect x="216.00" y="315.97" width="1" height="14.79" fill="#d2d2d4" />
<rect x="105.60" y="330.71" width="1" height="14.79" fill="#d2d2d4" />
<rect x="133.30" y="330.71" width="1" height="14.79" fill="#d2d2d4" />
<rect x="161.00" y="330.71" width="1" height="14.79" fill="#d2d2d4" />
<rect x="188.50" y="330.71" width="1" height="14.79" fill="#d2d2d4" />
<rect x="216.00" y="330.71" width="1" height="14.79" fill="#d2d2d4" />
<rect x="105.60" y="345.45" width="1" height="14.79" fill="#d2d2d4" />
<rect x="133.30" y="345.45" width="1" height="14.79" fill="#d2d2d4" />
<rect x="161.00" y="345.45" width="1" height="14.79" fill="#d2d2d4" />
<rect x="188.50" y="345.45" width="1" height="14.79" fill="#d2d2d4" />
<rect x="216.00" y="345.45" width="1" height="14.79" fill="#d2d2d4" />
<rect x="105.60" y="360.19" width="1" height="14.79" fill="#d2d2d4" />
<rect x="133.30" y="360.19" width="1" height="14.79" fill="#d2d2d4" />
<rect x="161.00" y="360.19" width="1" height="14.79" fill="#d2d2d4" />
<rect x="188.50" y="360.19" width="1" height="14.79" fill="#d2d2d4" />
<rect x="216.00" y="360.19" width="1" height="14.79" fill="#d2d2d4" />
<rect x="105.60" y="374.93" width="1" height="14.79" fill="#d2d2d4" />
<rect x="133.30" y="374.93" width="1" height="14.79" fill="#d2d2d4" />
<rect x="161.00" y="374.93" width="1" height="14.79" fill="#d2d2d4" />
<rect x="188.50" y="374.93" width="1" height="14.79" fill="#d2d2d4" />
<rect x="216.00" y="374.93" width="1" height="14.79" fill="#d2d2d4" />
<rect x="105.60" y="389.67" width="1" height="14.79" fill="#d2d2d4" />
<rect x="133.30" y="389.67" width="1" height="14.79" fill="#d2d2d4" />
<rect x="161.00" y="389.67" width="1" height="14.79" fill="#d2d2d4" />
<rect x="188.50" y="389.67" width="1" height="14.79" fill="#d2d2d4" />
<rect x="216.00" y="389.67" width="1" height="14.79" fill="#d2d2d4" />
<rect x="105.60" y="404.41" width="1" height="14.79" fill="#d2d2d4" />
<rect x="133.30" y="404.41" width="1" height="14.79" fill="#d2d2d4" />
<rect x="161.00" y="404.41" width="1" height="14.79" fill="#d2d2d4" />
<rect x="188.50" y="404.41" width="1" height="14.79" fill="#d2d2d4" />
<rect x="216.00" y="404.41" width="1" height="14.79" fill="#d2d2d4" />
<rect x="105.60" y="419.15" width="1" height="14.79" fill="#d2d2d4" />
<rect x="133.30" y="419.15" width="1" height="14.79" fill="#d2d2d4" />
<rect x="161.00" y="419.15" width="1" height="14.79" fill="#d2d2d4" />
<rect x="188.50" y="419.15" width="1" height="14.79" fill="#d2d2d4" />
<rect x="216.00" y="419.15" width="1" height="14.79" fill="#d2d2d4" />
<rect x="105.60" y="433.89" width="1" height="14.79" fill="#d2d2d4" />
<rect x="133.30" y="433.89" width="1" height="14.79" fill="#d2d2d4" />
<rect x="161.00" y="433.89" width="1" height="14.79" fill="#d2d2d4" />
<rect x="188.50" y="433.89" width="1" height="14.79" fill="#d2d2d4" />
<rect x="216.00" y="433.89" width="1" height="14.79" fill="#d2d2d4" />
<rect x="105.60" y="448.63" width="1" height="14.79" fill="#d2d2d4" />
<rect x="133.30" y="448.63" width="1" height="14.79" fill="#d2d2d4" />
<rect x="161.00" y="448.63" width="1" height="14.79" fill="#d2d2d4" />
<rect x="188.50" y="448.63" width="1" height="14.79" fill="#d2d2d4" />
<rect x="216.00" y="448.63" width="1" height="14.79" fill="#d2d2d4" />
<rect x="105.60" y="463.37" width="1" height="14.79" fill="#d2d2d4" />
<rect x="133.30" y="463.37" width="1" height="14.79" fill="#d2d2d4" />
<rect x="161.00" y="463.37" width="1" height="14.79" fill="#d2d2d4" />
<rect x="188.50" y="463.37" width="1" height="14.79" fill="#d2d2d4" />
<rect x="216.00" y="463.37" width="1" height="14.79" fill="#d2d2d4" />
<rect x="105.60" y="478.11" width="1" height="14.79" fill="#d2d2d4" />
<rect x="133.30" y="478.11" width="1" height="14.79" fill="#d2d2d4" />
<rect x="161.00" y="478.11" width="1" height="14.79" fill="#d2d2d4" />
<rect x="188.50" y="478.11" width="1" height="14.79" fill="#d2d2d4" />
<rect x="216.00" y="478.11" width="1" height="14.79" fill="#d2d2d4" />
<rect x="105.60" y="492.85" width="1" height="14.79" fill="#d2d2d4" />
<rect x="133.30" y="492.85" width="1" height="14.79" fill="#d2d2d4" />
<rect x="161.00" y="492.85" width="1" height="14.79" fill="#d2d2d4" />
<rect x="188.50" y="492.85" width="1" height="14.79" fill="#d2d2d4" />
<rect x="216.00" y="492.85" width="1" height="14.79" fill="#d2d2d4" />
<rect x="105.60" y="507.59" width="1" height="14.79" fill="#d2d2d4" />
<rect x="133.30" y="507.59" width="1" height="14.79" fill="#d2d2d4" />
<rect x="161.00" y="507.59" width="1" height="14.79" fill="#d2d2d4" />
<rect x="188.50" y="507.59" width="1" height="14.79" fill="#d2d2d4" />
<rect x="216.00" y="507.59" width="1" height="14.79" fill="#d2d2d4" />
<rect x="105.60" y="522.33" width="1" height="14.79" fill="#d2d2d4" />
<rect x="133.30" y="522.33" width="1" height="14.79" fill="#d2d2d4" />
<rect x="161.00" y="522.33" width="1" height="14.79" fill="#d2d2d4" />
<rect x="188.50" y="522.33" width="1" height="14.79" fill="#d2d2d4" />
<rect x="216.00" y="522.33" width="1" height="14.79" fill="#d2d2d4" />
<rect x="105.60" y="537.07" width="1" height="14.79" fill="#d2d2d4" />
<rect x="133.30" y="537.07" width="1" height="14.79" fill="#d2d2d4" />
<rect x="161.00" y="537.07" width="1" height="14.79" fill="#d2d2d4" />
<rect x="188.50" y="537.07" width="1" height="14.79" fill="#d2d2d4" />
<rect x="216.00" y="537.07" width="1" height="14.79" fill="#d2d2d4" />
<rect x="105.60" y="551.81" width="1" height="14.79" fill="#d2d2d4" />
<rect x="133.30" y="551.81" width="1" height="14.79" fill="#d2d2d4" />
<rect x="161.00" y="551.81" width="1" height="14.79" fill="#d2d2d4" />
<rect x="188.50" y="551.81" width="1" height="14.79" fill="#d2d2d4" />
<rect x="216.00" y="551.81" width="1" height="14.79" fill="#d2d2d4" />
<rect x="105.60" y="566.55" width="1" height="14.79" fill="#d2d2d4" />
<rect x="133.30" y="566.55" width="1" height="14.79" fill="#d2d2d4" />
<rect x="161.00" y="566.55" width="1" height="14.79" fill="#d2d2d4" />
<rect x="188.50" y="566.55" width="1" height="14.79" fill="#d2d2d4" />
<rect x="216.00" y="566.55" width="1" height="14.79" fill="#d2d2d4" />
<rect x="105.60" y="581.29" width="1" height="14.79" fill="#d2d2d4" />
<rect x="133.30" y="581.29" width="1" height="14.79" fill="#d2d2d4" />
<rect x="161.00" y="581.29" width="1" height="14.79" fill="#d2d2d4" />
<rect x="188.50" y="581.29" width="1" height="14.79" fill="#d2d2d4" />
<rect x="216.00" y="581.29" width="1" height="14.79" fill="#d2d2d4" />
<rect x="243.10" y="581.29" width="1" height="14.79" fill="#d2d2d4" />
<rect x="105.60" y="596.03" width="1" height="14.79" fill="#d2d2d4" />
<rect x="133.30" y="596.03" width="1" height="14.79" fill="#d2d2d4" />
<rect x="161.00" y="596.03" width="1" height="14.79" fill="#d2d2d4" />
<rect x="188.50" y="596.03" width="1" height="14.79" fill="#d2d2d4" />
<rect x="105.60" y="610.77" width="1" height="14.79" fill="#d2d2d4" />
<rect x="133.30" y="610.77" width="1" height="14.79" fill="#d2d2d4" />
<rect x="161.00" y="610.77" width="1" height="14.79" fill="#d2d2d4" />
<rect x="188.50" y="610.77" width="1" height="14.79" fill="#d2d2d4" />
<rect x="216.00" y="610.77" width="1" height="14.79" fill="#d2d2d4" />
<rect x="105.60" y="625.51" width="1" height="14.79" fill="#d2d2d4" />
<rect x="133.30" y="625.51" width="1" height="14.79" fill="#d2d2d4" />
<rect x="161.00" y="625.51" width="1" height="14.79" fill="#d2d2d4" />
<rect x="188.50" y="625.51" width="1" height="14.79" fill="#d2d2d4" />
<rect x="216.00" y="625.51" width="1" height="14.79" fill="#d2d2d4" />
<rect x="243.10" y="625.51" width="1" height="14.79" fill="#d2d2d4" />
<rect x="105.60" y="640.25" width="1" height="14.79" fill="#d2d2d4" />
<rect x="133.30" y="640.25" width="1" height="14.79" fill="#d2d2d4" />
<rect x="161.00" y="640.25" width="1" height="14.79" fill="#d2d2d4" />
<rect x="188.50" y="640.25" width="1" height="14.79" fill="#d2d2d4" />
<rect x="105.60" y="654.99" width="1" height="14.79" fill="#d2d2d4" />
<rect x="133.30" y="654.99" width="1" height="14.79" fill="#d2d2d4" />
<rect x="161.00" y="654.99" width="1" height="14.79" fill="#d2d2d4" />
<rect x="188.50" y="654.99" width="1" height="14.79" fill="#d2d2d4" />
<rect x="216.00" y="654.99" width="1" height="14.79" fill="#d2d2d4" />
<rect x="69" y="79" width="1.4" height="593" fill="#a2a2a4" />
<circle cx="69.7" cy="87.50" r="5.1" fill="#fcf7cf" stroke="#b5af85" stroke-width="1.1"/>
<rect x="66.7" y="86.80" width="6" height="1.5" fill="#a59d6c"/>
<circle cx="69.7" cy="146.46" r="5.1" fill="#fcf7cf" stroke="#b5af85" stroke-width="1.1"/>
<rect x="66.7" y="145.76" width="6" height="1.5" fill="#a59d6c"/>
<circle cx="69.7" cy="205.42" r="5.1" fill="#fcf7cf" stroke="#b5af85" stroke-width="1.1"/>
<rect x="66.7" y="204.72" width="6" height="1.5" fill="#a59d6c"/>
<circle cx="69.7" cy="573.92" r="5.1" fill="#fcf7cf" stroke="#b5af85" stroke-width="1.1"/>
<rect x="66.7" y="573.22" width="6" height="1.5" fill="#a59d6c"/>
<circle cx="69.7" cy="618.14" r="5.1" fill="#fcf7cf" stroke="#b5af85" stroke-width="1.1"/>
<rect x="66.7" y="617.44" width="6" height="1.5" fill="#a59d6c"/>
<circle cx="69.7" cy="662.36" r="5.1" fill="#fcf7cf" stroke="#b5af85" stroke-width="1.1"/>
<rect x="66.7" y="661.66" width="6" height="1.5" fill="#a59d6c"/>
<rect x="70" y="603.40" width="5" height="1" fill="#a2a2a4" />
<rect x="70" y="647.62" width="5" height="1" fill="#a2a2a4" />
<text x="132.30" y="91.73" font-family="Liberation Mono" font-size="11.4667" stroke-width="0.08" xml:space="preserve"><tspan fill="#2a3ad8" stroke="#2a3ad8">{</tspan></text>
<text x="38.80" y="92.00" font-family="Liberation Sans" font-size="11.8" font-weight="normal" fill="#1e1e1e" text-anchor="end" stroke="#1e1e1e" stroke-width="0.15">7</text>
<text x="166.70" y="106.47" font-family="Liberation Mono" font-size="11.4667" stroke-width="0.08" xml:space="preserve"><tspan fill="#952848" stroke="#952848">&quot;httpMethod&quot;</tspan><tspan fill="#2330c8" stroke="#2330c8">: </tspan><tspan fill="#1c1c1c" stroke="#1c1c1c">&quot;POST&quot;</tspan><tspan fill="#2330c8" stroke="#2330c8">,</tspan></text>
<text x="38.80" y="106.74" font-family="Liberation Sans" font-size="11.8" font-weight="normal" fill="#1e1e1e" text-anchor="end" stroke="#1e1e1e" stroke-width="0.15">8</text>
<text x="166.70" y="121.21" font-family="Liberation Mono" font-size="11.4667" stroke-width="0.08" xml:space="preserve"><tspan fill="#952848" stroke="#952848">&quot;resourceUrl&quot;</tspan><tspan fill="#2330c8" stroke="#2330c8">: </tspan><tspan fill="#1c1c1c" stroke="#1c1c1c">&quot;/orderReleases/RESTAPI.20201216-0001&quot;</tspan><tspan fill="#2330c8" stroke="#2330c8">,</tspan></text>
<text x="38.80" y="121.48" font-family="Liberation Sans" font-size="11.8" font-weight="normal" fill="#1e1e1e" text-anchor="end" stroke="#1e1e1e" stroke-width="0.15">9</text>
<text x="166.70" y="135.95" font-family="Liberation Mono" font-size="11.4667" stroke-width="0.08" xml:space="preserve"><tspan fill="#952848" stroke="#952848">&quot;contentType&quot;</tspan><tspan fill="#2330c8" stroke="#2330c8">: </tspan><tspan fill="#1c1c1c" stroke="#1c1c1c">&quot;application/vnd.oracle.resource+json; type=singular&quot;</tspan><tspan fill="#2330c8" stroke="#2330c8">,</tspan></text>
<text x="38.80" y="136.22" font-family="Liberation Sans" font-size="11.8" font-weight="normal" fill="#1e1e1e" text-anchor="end" stroke="#1e1e1e" stroke-width="0.15">10</text>
<text x="166.70" y="150.69" font-family="Liberation Mono" font-size="11.4667" stroke-width="0.08" xml:space="preserve"><tspan fill="#952848" stroke="#952848">&quot;body&quot;</tspan><tspan fill="#2330c8" stroke="#2330c8">: </tspan><tspan fill="#2a3ad8" stroke="#2a3ad8">{</tspan></text>
<text x="38.80" y="150.96" font-family="Liberation Sans" font-size="11.8" font-weight="normal" fill="#1e1e1e" text-anchor="end" stroke="#1e1e1e" stroke-width="0.15">11</text>
<text x="194.22" y="165.43" font-family="Liberation Mono" font-size="11.4667" stroke-width="0.08" xml:space="preserve"><tspan fill="#952848" stroke="#952848">&quot;orderReleaseGid&quot;</tspan><tspan fill="#2330c8" stroke="#2330c8">: </tspan><tspan fill="#1c1c1c" stroke="#1c1c1c">&quot;RESTAPI.20201216-0001&quot;</tspan><tspan fill="#2330c8" stroke="#2330c8">,</tspan></text>
<text x="38.80" y="165.70" font-family="Liberation Sans" font-size="11.8" font-weight="normal" fill="#1e1e1e" text-anchor="end" stroke="#1e1e1e" stroke-width="0.15">12</text>
<text x="194.22" y="180.17" font-family="Liberation Mono" font-size="11.4667" stroke-width="0.08" xml:space="preserve"><tspan fill="#952848" stroke="#952848">&quot;orderReleaseXid&quot;</tspan><tspan fill="#2330c8" stroke="#2330c8">: </tspan><tspan fill="#1c1c1c" stroke="#1c1c1c">&quot;20201216-0001&quot;</tspan><tspan fill="#2330c8" stroke="#2330c8">,</tspan></text>
<text x="38.80" y="180.44" font-family="Liberation Sans" font-size="11.8" font-weight="normal" fill="#1e1e1e" text-anchor="end" stroke="#1e1e1e" stroke-width="0.15">13</text>
<text x="194.22" y="194.91" font-family="Liberation Mono" font-size="11.4667" stroke-width="0.08" xml:space="preserve"><tspan fill="#952848" stroke="#952848">&quot;isTemplate&quot;</tspan><tspan fill="#2330c8" stroke="#2330c8">: </tspan><tspan fill="#2a8a8a" stroke="#2a8a8a">false</tspan><tspan fill="#2330c8" stroke="#2330c8">,</tspan></text>
<text x="38.80" y="195.18" font-family="Liberation Sans" font-size="11.8" font-weight="normal" fill="#1e1e1e" text-anchor="end" stroke="#1e1e1e" stroke-width="0.15">14</text>
<text x="194.22" y="209.65" font-family="Liberation Mono" font-size="11.4667" stroke-width="0.08" xml:space="preserve"><tspan fill="#952848" stroke="#952848">&quot;sourceLocation&quot;</tspan><tspan fill="#2330c8" stroke="#2330c8">: </tspan><tspan fill="#2a3ad8" stroke="#2a3ad8">{</tspan></text>
<text x="38.80" y="209.92" font-family="Liberation Sans" font-size="11.8" font-weight="normal" fill="#1e1e1e" text-anchor="end" stroke="#1e1e1e" stroke-width="0.15">15</text>
<text x="221.74" y="224.39" font-family="Liberation Mono" font-size="11.4667" stroke-width="0.08" xml:space="preserve"><tspan fill="#952848" stroke="#952848">&quot;locationGid&quot;</tspan><tspan fill="#2330c8" stroke="#2330c8">: </tspan><tspan fill="#1c1c1c" stroke="#1c1c1c">&quot;RESTAPI.TSDC_MEMPHIS&quot;</tspan><tspan fill="#2330c8" stroke="#2330c8">,</tspan></text>
<text x="38.80" y="224.66" font-family="Liberation Sans" font-size="11.8" font-weight="normal" fill="#1e1e1e" text-anchor="end" stroke="#1e1e1e" stroke-width="0.15">16</text>
<text x="221.74" y="239.13" font-family="Liberation Mono" font-size="11.4667" stroke-width="0.08" xml:space="preserve"><tspan fill="#952848" stroke="#952848">&quot;locationXid&quot;</tspan><tspan fill="#2330c8" stroke="#2330c8">: </tspan><tspan fill="#1c1c1c" stroke="#1c1c1c">&quot;TSDC_MEMPHIS&quot;</tspan><tspan fill="#2330c8" stroke="#2330c8">,</tspan></text>
<text x="38.80" y="239.40" font-family="Liberation Sans" font-size="11.8" font-weight="normal" fill="#1e1e1e" text-anchor="end" stroke="#1e1e1e" stroke-width="0.15">17</text>
<text x="221.74" y="253.87" font-family="Liberation Mono" font-size="11.4667" stroke-width="0.08" xml:space="preserve"><tspan fill="#952848" stroke="#952848">&quot;locationName&quot;</tspan><tspan fill="#2330c8" stroke="#2330c8">: </tspan><tspan fill="#1c1c1c" stroke="#1c1c1c">&quot;TS DISTRIBUTION CENTER - MEMPHIS TN&quot;</tspan><tspan fill="#2330c8" stroke="#2330c8">,</tspan></text>
<text x="38.80" y="254.14" font-family="Liberation Sans" font-size="11.8" font-weight="normal" fill="#1e1e1e" text-anchor="end" stroke="#1e1e1e" stroke-width="0.15">18</text>
<text x="221.74" y="268.61" font-family="Liberation Mono" font-size="11.4667" stroke-width="0.08" xml:space="preserve"><tspan fill="#952848" stroke="#952848">&quot;city&quot;</tspan><tspan fill="#2330c8" stroke="#2330c8">: </tspan><tspan fill="#1c1c1c" stroke="#1c1c1c">&quot;MEMPHIS&quot;</tspan><tspan fill="#2330c8" stroke="#2330c8">,</tspan></text>
<text x="38.80" y="268.88" font-family="Liberation Sans" font-size="11.8" font-weight="normal" fill="#1e1e1e" text-anchor="end" stroke="#1e1e1e" stroke-width="0.15">19</text>
<text x="221.74" y="283.35" font-family="Liberation Mono" font-size="11.4667" stroke-width="0.08" xml:space="preserve"><tspan fill="#952848" stroke="#952848">&quot;provinceCode&quot;</tspan><tspan fill="#2330c8" stroke="#2330c8">: </tspan><tspan fill="#1c1c1c" stroke="#1c1c1c">&quot;TN&quot;</tspan><tspan fill="#2330c8" stroke="#2330c8">,</tspan></text>
<text x="38.80" y="283.62" font-family="Liberation Sans" font-size="11.8" font-weight="normal" fill="#1e1e1e" text-anchor="end" stroke="#1e1e1e" stroke-width="0.15">20</text>
<text x="221.74" y="298.09" font-family="Liberation Mono" font-size="11.4667" stroke-width="0.08" xml:space="preserve"><tspan fill="#952848" stroke="#952848">&quot;postalCode&quot;</tspan><tspan fill="#2330c8" stroke="#2330c8">: </tspan><tspan fill="#2a8a8a" stroke="#2a8a8a">30103</tspan><tspan fill="#2330c8" stroke="#2330c8">,</tspan></text>
<text x="38.80" y="298.36" font-family="Liberation Sans" font-size="11.8" font-weight="normal" fill="#1e1e1e" text-anchor="end" stroke="#1e1e1e" stroke-width="0.15">21</text>
<text x="221.74" y="312.83" font-family="Liberation Mono" font-size="11.4667" stroke-width="0.08" xml:space="preserve"><tspan fill="#952848" stroke="#952848">&quot;countryCode3Gid&quot;</tspan><tspan fill="#2330c8" stroke="#2330c8">: </tspan><tspan fill="#1c1c1c" stroke="#1c1c1c">&quot;USA&quot;</tspan><tspan fill="#2330c8" stroke="#2330c8">,</tspan></text>
<text x="38.80" y="313.10" font-family="Liberation Sans" font-size="11.8" font-weight="normal" fill="#1e1e1e" text-anchor="end" stroke="#1e1e1e" stroke-width="0.15">22</text>
<text x="221.74" y="327.57" font-family="Liberation Mono" font-size="11.4667" stroke-width="0.08" xml:space="preserve"><tspan fill="#952848" stroke="#952848">&quot;timeZoneGid&quot;</tspan><tspan fill="#2330c8" stroke="#2330c8">: </tspan><tspan fill="#1c1c1c" stroke="#1c1c1c">&quot;America/Chicago&quot;</tspan><tspan fill="#2330c8" stroke="#2330c8">,</tspan></text>
<text x="38.80" y="327.84" font-family="Liberation Sans" font-size="11.8" font-weight="normal" fill="#1e1e1e" text-anchor="end" stroke="#1e1e1e" stroke-width="0.15">23</text>
<text x="221.74" y="342.31" font-family="Liberation Mono" font-size="11.4667" stroke-width="0.08" xml:space="preserve"><tspan fill="#952848" stroke="#952848">&quot;lat&quot;</tspan><tspan fill="#2330c8" stroke="#2330c8">: </tspan><tspan fill="#2a8a8a" stroke="#2a8a8a">34.35124</tspan><tspan fill="#2330c8" stroke="#2330c8">,</tspan></text>
<text x="38.80" y="342.58" font-family="Liberation Sans" font-size="11.8" font-weight="normal" fill="#1e1e1e" text-anchor="end" stroke="#1e1e1e" stroke-width="0.15">24</text>
<text x="221.74" y="357.05" font-family="Liberation Mono" font-size="11.4667" stroke-width="0.08" xml:space="preserve"><tspan fill="#952848" stroke="#952848">&quot;lon&quot;</tspan><tspan fill="#2330c8" stroke="#2330c8">: </tspan><tspan fill="#2a8a8a" stroke="#2a8a8a">-84.91381</tspan><tspan fill="#2330c8" stroke="#2330c8">,</tspan></text>
<text x="38.80" y="357.32" font-family="Liberation Sans" font-size="11.8" font-weight="normal" fill="#1e1e1e" text-anchor="end" stroke="#1e1e1e" stroke-width="0.15">25</text>
<text x="221.74" y="371.79" font-family="Liberation Mono" font-size="11.4667" stroke-width="0.08" xml:space="preserve"><tspan fill="#952848" stroke="#952848">&quot;isTemporary&quot;</tspan><tspan fill="#2330c8" stroke="#2330c8">: </tspan><tspan fill="#2a8a8a" stroke="#2a8a8a">false</tspan><tspan fill="#2330c8" stroke="#2330c8">,</tspan></text>
<text x="38.80" y="372.06" font-family="Liberation Sans" font-size="11.8" font-weight="normal" fill="#1e1e1e" text-anchor="end" stroke="#1e1e1e" stroke-width="0.15">26</text>
<text x="221.74" y="386.53" font-family="Liberation Mono" font-size="11.4667" stroke-width="0.08" xml:space="preserve"><tspan fill="#952848" stroke="#952848">&quot;isMakeApptBeforePlan&quot;</tspan><tspan fill="#2330c8" stroke="#2330c8">: </tspan><tspan fill="#2a8a8a" stroke="#2a8a8a">false</tspan><tspan fill="#2330c8" stroke="#2330c8">,</tspan></text>
<text x="38.80" y="386.80" font-family="Liberation Sans" font-size="11.8" font-weight="normal" fill="#1e1e1e" text-anchor="end" stroke="#1e1e1e" stroke-width="0.15">27</text>
<text x="221.74" y="401.27" font-family="Liberation Mono" font-size="11.4667" stroke-width="0.08" xml:space="preserve"><tspan fill="#952848" stroke="#952848">&quot;isShipperKnown&quot;</tspan><tspan fill="#2330c8" stroke="#2330c8">: </tspan><tspan fill="#2a8a8a" stroke="#2a8a8a">true</tspan><tspan fill="#2330c8" stroke="#2330c8">,</tspan></text>
<text x="38.80" y="401.54" font-family="Liberation Sans" font-size="11.8" font-weight="normal" fill="#1e1e1e" text-anchor="end" stroke="#1e1e1e" stroke-width="0.15">28</text>
<text x="221.74" y="416.01" font-family="Liberation Mono" font-size="11.4667" stroke-width="0.08" xml:space="preserve"><tspan fill="#952848" stroke="#952848">&quot;isAddressValid&quot;</tspan><tspan fill="#2330c8" stroke="#2330c8">: </tspan><tspan fill="#1c1c1c" stroke="#1c1c1c">&quot;U&quot;</tspan><tspan fill="#2330c8" stroke="#2330c8">,</tspan></text>
<text x="38.80" y="416.28" font-family="Liberation Sans" font-size="11.8" font-weight="normal" fill="#1e1e1e" text-anchor="end" stroke="#1e1e1e" stroke-width="0.15">29</text>
<text x="221.74" y="430.75" font-family="Liberation Mono" font-size="11.4667" stroke-width="0.08" xml:space="preserve"><tspan fill="#952848" stroke="#952848">&quot;isLtlSplitable&quot;</tspan><tspan fill="#2330c8" stroke="#2330c8">: </tspan><tspan fill="#2a8a8a" stroke="#2a8a8a">false</tspan><tspan fill="#2330c8" stroke="#2330c8">,</tspan></text>
<text x="38.80" y="431.02" font-family="Liberation Sans" font-size="11.8" font-weight="normal" fill="#1e1e1e" text-anchor="end" stroke="#1e1e1e" stroke-width="0.15">30</text>
<text x="221.74" y="445.49" font-family="Liberation Mono" font-size="11.4667" stroke-width="0.08" xml:space="preserve"><tspan fill="#952848" stroke="#952848">&quot;bbIsNewStore&quot;</tspan><tspan fill="#2330c8" stroke="#2330c8">: </tspan><tspan fill="#2a8a8a" stroke="#2a8a8a">false</tspan><tspan fill="#2330c8" stroke="#2330c8">,</tspan></text>
<text x="38.80" y="445.76" font-family="Liberation Sans" font-size="11.8" font-weight="normal" fill="#1e1e1e" text-anchor="end" stroke="#1e1e1e" stroke-width="0.15">31</text>
<text x="221.74" y="460.23" font-family="Liberation Mono" font-size="11.4667" stroke-width="0.08" xml:space="preserve"><tspan fill="#952848" stroke="#952848">&quot;excludeFromRouteExecution&quot;</tspan><tspan fill="#2330c8" stroke="#2330c8">: </tspan><tspan fill="#2a8a8a" stroke="#2a8a8a">false</tspan><tspan fill="#2330c8" stroke="#2330c8">,</tspan></text>
<text x="38.80" y="460.50" font-family="Liberation Sans" font-size="11.8" font-weight="normal" fill="#1e1e1e" text-anchor="end" stroke="#1e1e1e" stroke-width="0.15">32</text>
<text x="221.74" y="474.97" font-family="Liberation Mono" font-size="11.4667" stroke-width="0.08" xml:space="preserve"><tspan fill="#952848" stroke="#952848">&quot;isTemplate&quot;</tspan><tspan fill="#2330c8" stroke="#2330c8">: </tspan><tspan fill="#2a8a8a" stroke="#2a8a8a">false</tspan><tspan fill="#2330c8" stroke="#2330c8">,</tspan></text>
<text x="38.80" y="475.24" font-family="Liberation Sans" font-size="11.8" font-weight="normal" fill="#1e1e1e" text-anchor="end" stroke="#1e1e1e" stroke-width="0.15">33</text>
<text x="221.74" y="489.71" font-family="Liberation Mono" font-size="11.4667" stroke-width="0.08" xml:space="preserve"><tspan fill="#952848" stroke="#952848">&quot;description&quot;</tspan><tspan fill="#2330c8" stroke="#2330c8">: </tspan><tspan fill="#1c1c1c" stroke="#1c1c1c">&quot;TRUE STEEL DISTRIBUTION CENTER - MEMPHIS&quot;</tspan><tspan fill="#2330c8" stroke="#2330c8">,</tspan></text>
<text x="38.80" y="489.98" font-family="Liberation Sans" font-size="11.8" font-weight="normal" fill="#1e1e1e" text-anchor="end" stroke="#1e1e1e" stroke-width="0.15">34</text>
<text x="221.74" y="504.45" font-family="Liberation Mono" font-size="11.4667" stroke-width="0.08" xml:space="preserve"><tspan fill="#952848" stroke="#952848">&quot;isFixedAddress&quot;</tspan><tspan fill="#2330c8" stroke="#2330c8">: </tspan><tspan fill="#2a8a8a" stroke="#2a8a8a">false</tspan><tspan fill="#2330c8" stroke="#2330c8">,</tspan></text>
<text x="38.80" y="504.72" font-family="Liberation Sans" font-size="11.8" font-weight="normal" fill="#1e1e1e" text-anchor="end" stroke="#1e1e1e" stroke-width="0.15">35</text>
<text x="221.74" y="519.19" font-family="Liberation Mono" font-size="11.4667" stroke-width="0.08" xml:space="preserve"><tspan fill="#952848" stroke="#952848">&quot;primaryAddressLineSeq&quot;</tspan><tspan fill="#2330c8" stroke="#2330c8">: </tspan><tspan fill="#2a8a8a" stroke="#2a8a8a">1</tspan><tspan fill="#2330c8" stroke="#2330c8">,</tspan></text>
<text x="38.80" y="519.46" font-family="Liberation Sans" font-size="11.8" font-weight="normal" fill="#1e1e1e" text-anchor="end" stroke="#1e1e1e" stroke-width="0.15">36</text>
<text x="221.74" y="533.93" font-family="Liberation Mono" font-size="11.4667" stroke-width="0.08" xml:space="preserve"><tspan fill="#952848" stroke="#952848">&quot;domainName&quot;</tspan><tspan fill="#2330c8" stroke="#2330c8">: </tspan><tspan fill="#1c1c1c" stroke="#1c1c1c">&quot;RESTAPI&quot;</tspan><tspan fill="#2330c8" stroke="#2330c8">,</tspan></text>
<text x="38.80" y="534.20" font-family="Liberation Sans" font-size="11.8" font-weight="normal" fill="#1e1e1e" text-anchor="end" stroke="#1e1e1e" stroke-width="0.15">37</text>
<text x="221.74" y="548.67" font-family="Liberation Mono" font-size="11.4667" stroke-width="0.08" xml:space="preserve"><tspan fill="#952848" stroke="#952848">&quot;isActive&quot;</tspan><tspan fill="#2330c8" stroke="#2330c8">: </tspan><tspan fill="#2a8a8a" stroke="#2a8a8a">true</tspan><tspan fill="#2330c8" stroke="#2330c8">,</tspan></text>
<text x="38.80" y="548.94" font-family="Liberation Sans" font-size="11.8" font-weight="normal" fill="#1e1e1e" text-anchor="end" stroke="#1e1e1e" stroke-width="0.15">38</text>
<text x="221.74" y="563.41" font-family="Liberation Mono" font-size="11.4667" stroke-width="0.08" xml:space="preserve"><tspan fill="#952848" stroke="#952848">&quot;isWmsFacility&quot;</tspan><tspan fill="#2330c8" stroke="#2330c8">: </tspan><tspan fill="#2a8a8a" stroke="#2a8a8a">false</tspan><tspan fill="#2330c8" stroke="#2330c8">,</tspan></text>
<text x="38.80" y="563.68" font-family="Liberation Sans" font-size="11.8" font-weight="normal" fill="#1e1e1e" text-anchor="end" stroke="#1e1e1e" stroke-width="0.15">39</text>
<text x="221.74" y="578.15" font-family="Liberation Mono" font-size="11.4667" stroke-width="0.08" xml:space="preserve"><tspan fill="#952848" stroke="#952848">&quot;updateDate&quot;</tspan><tspan fill="#2330c8" stroke="#2330c8">: </tspan><tspan fill="#2a3ad8" stroke="#2a3ad8">{</tspan></text>
<text x="38.80" y="578.42" font-family="Liberation Sans" font-size="11.8" font-weight="normal" fill="#1e1e1e" text-anchor="end" stroke="#1e1e1e" stroke-width="0.15">40</text>
<text x="249.26" y="592.89" font-family="Liberation Mono" font-size="11.4667" stroke-width="0.08" xml:space="preserve"><tspan fill="#952848" stroke="#952848">&quot;value&quot;</tspan><tspan fill="#2330c8" stroke="#2330c8">: </tspan><tspan fill="#1c1c1c" stroke="#1c1c1c">&quot;2021-11-05T20:36:45Z&quot;</tspan></text>
<text x="38.80" y="593.16" font-family="Liberation Sans" font-size="11.8" font-weight="normal" fill="#1e1e1e" text-anchor="end" stroke="#1e1e1e" stroke-width="0.15">41</text>
<text x="214.86" y="607.63" font-family="Liberation Mono" font-size="11.4667" stroke-width="0.08" xml:space="preserve"><tspan fill="#2a3ad8" stroke="#2a3ad8">}</tspan><tspan fill="#2330c8" stroke="#2330c8">,</tspan></text>
<text x="38.80" y="607.90" font-family="Liberation Sans" font-size="11.8" font-weight="normal" fill="#1e1e1e" text-anchor="end" stroke="#1e1e1e" stroke-width="0.15">42</text>
<text x="221.74" y="622.37" font-family="Liberation Mono" font-size="11.4667" stroke-width="0.08" xml:space="preserve"><tspan fill="#952848" stroke="#952848">&quot;insertDate&quot;</tspan><tspan fill="#2330c8" stroke="#2330c8">: </tspan><tspan fill="#2a3ad8" stroke="#2a3ad8">{</tspan></text>
<text x="38.80" y="622.64" font-family="Liberation Sans" font-size="11.8" font-weight="normal" fill="#1e1e1e" text-anchor="end" stroke="#1e1e1e" stroke-width="0.15">43</text>
<text x="249.26" y="637.11" font-family="Liberation Mono" font-size="11.4667" stroke-width="0.08" xml:space="preserve"><tspan fill="#952848" stroke="#952848">&quot;value&quot;</tspan><tspan fill="#2330c8" stroke="#2330c8">: </tspan><tspan fill="#1c1c1c" stroke="#1c1c1c">&quot;2020-12-11T22:17:12Z&quot;</tspan></text>
<text x="38.80" y="637.38" font-family="Liberation Sans" font-size="11.8" font-weight="normal" fill="#1e1e1e" text-anchor="end" stroke="#1e1e1e" stroke-width="0.15">44</text>
<text x="214.86" y="651.85" font-family="Liberation Mono" font-size="11.4667" stroke-width="0.08" xml:space="preserve"><tspan fill="#2a3ad8" stroke="#2a3ad8">}</tspan><tspan fill="#2330c8" stroke="#2330c8">,</tspan></text>
<text x="38.80" y="652.12" font-family="Liberation Sans" font-size="11.8" font-weight="normal" fill="#1e1e1e" text-anchor="end" stroke="#1e1e1e" stroke-width="0.15">45</text>
<text x="221.74" y="666.59" font-family="Liberation Mono" font-size="11.4667" stroke-width="0.08" xml:space="preserve"><tspan fill="#952848" stroke="#952848">&quot;roleProfiles&quot;</tspan><tspan fill="#2330c8" stroke="#2330c8">: </tspan><tspan fill="#2a3ad8" stroke="#2a3ad8">{</tspan></text>
<text x="38.80" y="666.86" font-family="Liberation Sans" font-size="11.8" font-weight="normal" fill="#1e1e1e" text-anchor="end" stroke="#1e1e1e" stroke-width="0.15">46</text>
<rect x="241.88" y="287.49" width="1.2" height="13.24" fill="#000" />
<path d="M253.8 377.7 Q256.3 378.1 256.3 379.7 V389.7 Q256.3 390.7 253.8 391.0 M258.8 377.7 Q256.3 378.1 256.3 379.7 M256.3 389.7 Q256.3 390.7 258.8 391.0" stroke="#111" stroke-width="1.1" fill="none"/>
<rect x="0" y="672" width="1168" height="49" fill="#dcdcdf" />
<rect x="3.8" y="672" width="1161" height="19.3" fill="#efeef1" />
<rect x="2" y="672" width="1.8" height="19.3" fill="#c2c2c4" />
<rect x="3.8" y="672" width="1.2" height="19.3" fill="#fcfcfd" />
<rect x="3.8" y="691.2" width="1161" height="1.3" fill="#7c7c7e" />
<rect x="1164" y="672" width="1.5" height="20.5" fill="#a9a9ab" />
<path d="M8.9 690.6 V673.9 H51.2" stroke="#8a8a8c" stroke-width="1.4" fill="none"/>
<path d="M9.5 690.4 H51.2 V674.2" stroke="#fafafa" stroke-width="0.9" fill="none"/>
<text x="17.50" y="687.00" font-family="Liberation Sans" font-size="11.5" font-weight="bold" fill="#111" text-anchor="start" textLength="22.50" lengthAdjust="spacingAndGlyphs" >Text</text>
<rect x="53" y="673" width="1" height="17.5" fill="#c9c9cb" />
<text x="67.80" y="687.00" font-family="Liberation Sans" font-size="12" font-weight="normal" fill="#222" text-anchor="start" textLength="18.50" lengthAdjust="spacingAndGlyphs"  stroke="#222" stroke-width="0.2">Grid</text>
<rect x="101.5" y="673" width="1" height="17.5" fill="#c9c9cb" />
<text x="117.00" y="687.00" font-family="Liberation Sans" font-size="12" font-weight="normal" fill="#222" text-anchor="start" textLength="38.00" lengthAdjust="spacingAndGlyphs"  stroke="#222" stroke-width="0.2">Schema</text>
<rect x="171.5" y="673" width="1" height="17.5" fill="#c9c9cb" />
<rect x="0" y="692.5" width="1165" height="23.5" fill="#efeef2" />
<rect x="111" y="692.9" width="105.8" height="21.4" rx="2" fill="#fdfdfd" stroke="#b4b4b6" stroke-width="1"/>
<path d="M11.5 696.5 H21.5 V712.5 H8.8 V699.2 Z" fill="#fff" stroke="#555" stroke-width="1.1"/><path d="M8.8 699.2 L11.5 696.5 V699.2 Z" fill="#333"/><rect x="8.2" y="701.5" width="14.3" height="7.5" fill="#d42a2a"/>
<text x="9" y="707.6" font-family="Liberation Sans" font-size="6" font-weight="bold" fill="#fff" textLength="12" lengthAdjust="spacingAndGlyphs">XML</text>
<text x="26.70" y="708.50" font-family="Liberation Sans" font-size="12" font-weight="normal" fill="#8a8a8c" text-anchor="start" textLength="74.00" lengthAdjust="spacingAndGlyphs"  stroke="#8a8a8c" stroke-width="0.2">Untitled1.xml *</text>
<path d="M117.5 696.5 H127.6 V712.5 H114.8 V699.2 Z" fill="#fff" stroke="#555" stroke-width="1.1"/><path d="M114.8 699.2 L117.5 696.5 V699.2 Z" fill="#333"/><rect x="114.2" y="701.5" width="14.3" height="7.5" fill="#3a3ae0"/>
<text x="115" y="707.6" font-family="Liberation Sans" font-size="6" font-weight="bold" fill="#fff" textLength="12" lengthAdjust="spacingAndGlyphs">JSON</text>
<text x="131.50" y="708.50" font-family="Liberation Sans" font-size="12" font-weight="bold" fill="#111" text-anchor="start" textLength="79.00" lengthAdjust="spacingAndGlyphs" >Untitled2.json *</text>
<path d="M1138.8 700.6 L1134.4 704.8 L1138.8 709 Z" fill="none" stroke="#555" stroke-width="1.1"/>
<path d="M1151 700.6 L1155.4 704.8 L1151 709 Z" fill="none" stroke="#555" stroke-width="1.1"/>
<rect x="0" y="720.6" width="1168" height="1" fill="#f6f6f7" />
<rect x="0" y="721.5" width="1168" height="16.5" fill="#f0eff2" />
<text x="2.00" y="735.50" font-family="Liberation Sans" font-size="12" font-weight="normal" fill="#222" text-anchor="start" textLength="235.60" lengthAdjust="spacingAndGlyphs"  stroke="#222" stroke-width="0.2">XMLSpy Enterprise Edition v2018 rel. 2 sp1 (x64)</text>
<text x="247.90" y="735.50" font-family="Liberation Sans" font-size="12" font-weight="normal" fill="#222" text-anchor="start" textLength="305.00" lengthAdjust="spacingAndGlyphs"  stroke="#222" stroke-width="0.2">Connected to Altova LicenseServer at den03fid.us.oracle.com</text>
<text x="563.00" y="735.50" font-family="Liberation Sans" font-size="12" font-weight="normal" fill="#222" text-anchor="start" textLength="129.00" lengthAdjust="spacingAndGlyphs"  stroke="#222" stroke-width="0.2">©1998-2018 Altova GmbH</text>
<text x="984.90" y="735.50" font-family="Liberation Sans" font-size="12" font-weight="bold" fill="#222" text-anchor="start" textLength="63.50" lengthAdjust="spacingAndGlyphs" >Ln 21, Col 10</text>
<rect x="1053.7" y="722.5" width="1" height="15.5" fill="#d6d6d8" />
<rect x="1083.3" y="722.5" width="1" height="15.5" fill="#d6d6d8" />
<rect x="1118.4" y="722.5" width="1" height="15.5" fill="#d6d6d8" />
<rect x="1152.9" y="722.5" width="1" height="15.5" fill="#d6d6d8" />
<text x="1058.40" y="735.50" font-family="Liberation Sans" font-size="12" font-weight="normal" fill="#555" text-anchor="start" textLength="19.60" lengthAdjust="spacingAndGlyphs"  stroke="#555" stroke-width="0.2">CAP</text>
<text x="1087.60" y="735.50" font-family="Liberation Sans" font-size="12" font-weight="normal" fill="#555" text-anchor="start" textLength="25.40" lengthAdjust="spacingAndGlyphs"  stroke="#555" stroke-width="0.2">NUM</text>
<text x="1123.00" y="735.50" font-family="Liberation Sans" font-size="12" font-weight="normal" fill="#555" text-anchor="start" textLength="24.00" lengthAdjust="spacingAndGlyphs"  stroke="#555" stroke-width="0.2">SCRL</text>
<g fill="#b0b0b2"><rect x="1163" y="729" width="1.5" height="1.5"/><rect x="1160" y="732" width="1.5" height="1.5"/><rect x="1163" y="732" width="1.5" height="1.5"/><rect x="1157" y="735" width="1.5" height="1.5"/><rect x="1160" y="735" width="1.5" height="1.5"/><rect x="1163" y="735" width="1.5" height="1.5"/></g>
</svg></body></html>
